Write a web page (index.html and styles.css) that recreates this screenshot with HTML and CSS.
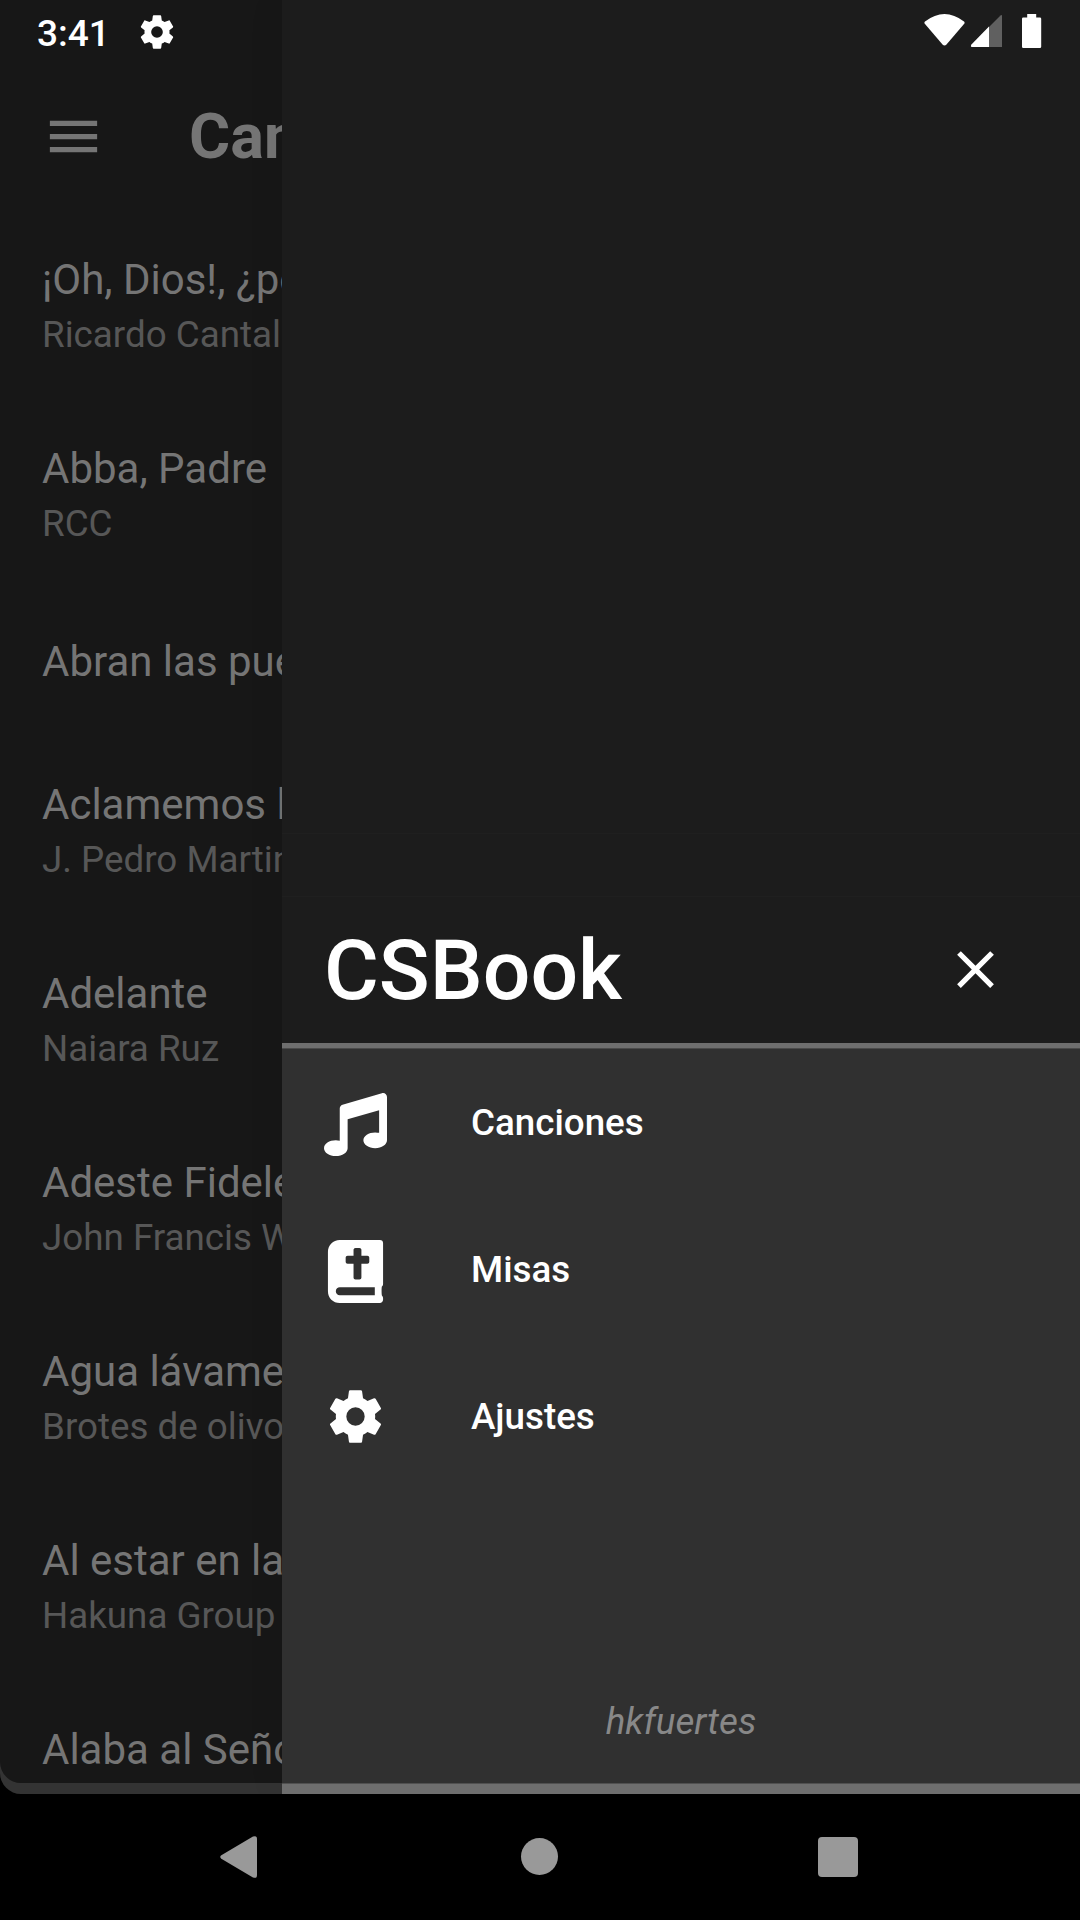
FILE: index.html
```html
<!DOCTYPE html>
<html lang="es">
<head>
<meta charset="utf-8">
<title>CSBook</title>
<link rel="stylesheet" href="styles.css">
</head>
<body>
<div class="phone">
  <div class="screen">
    <main class="page">
      <header class="appbar">
        <svg class="icon" viewBox="0 0 24 24"><path d="M3 18h18v-2H3v2zm0-5h18v-2H3v2zm0-7v2h18V6H3z"/></svg>
        <h1 class="appbar-title">Canciones</h1>
      </header>
      <ul class="songs">
        <li class="song"><span class="song-title">¡Oh, Dios!, ¿por qué?</span><span class="song-author">Ricardo Cantalapiedra</span></li>
        <li class="song"><span class="song-title">Abba, Padre</span><span class="song-author">RCC</span></li>
        <li class="song song-single"><span class="song-title">Abran las puertas</span></li>
        <li class="song"><span class="song-title">Aclamemos la gloria</span><span class="song-author">J. Pedro Martins</span></li>
        <li class="song"><span class="song-title">Adelante</span><span class="song-author">Naiara Ruz</span></li>
        <li class="song"><span class="song-title">Adeste Fideles</span><span class="song-author">John Francis Wade</span></li>
        <li class="song"><span class="song-title">Agua lávame</span><span class="song-author">Brotes de olivo</span></li>
        <li class="song"><span class="song-title">Al estar en la</span><span class="song-author">Hakuna Group</span></li>
        <li class="song"><span class="song-title">Alaba al Señor</span></li>
      </ul>
    </main>
    <aside class="drawer">
      <div class="drawer-head">
        <h2 class="brand">CSBook</h2>
        <svg class="icon close" viewBox="0 0 24 24"><path d="M19 6.41L17.59 5 12 10.59 6.41 5 5 6.41 10.59 12 5 17.59 6.41 19 12 13.41 17.59 19 19 17.59 13.41 12z"/></svg>
      </div>
      <nav class="menu">
        <a class="menu-item">
          <svg class="icon" viewBox="0 0 512 512"><path d="M511.99 32.01c0-21.71-21.1-37.01-41.6-30.51L150.4 96c-13.3 4.2-22.4 16.5-22.4 30.5v261.42c-10.05-2.38-20.72-3.92-32-3.92-53.02 0-96 28.65-96 64s42.98 64 96 64 96-28.65 96-64V214.31l256-75.02v184.63c-10.05-2.38-20.72-3.92-32-3.92-53.02 0-96 28.65-96 64s42.98 64 96 64 96-28.65 96-64l-.01-351.99z"/></svg>
          <span class="menu-label">Canciones</span>
        </a>
        <a class="menu-item">
          <svg class="icon" viewBox="-32 0 512 512"><path d="M448 358.4V25.6c0-16-9.6-25.6-25.6-25.6H96C41.6 0 0 41.6 0 96v320c0 54.4 41.6 96 96 96h326.4c12.8 0 25.6-9.6 25.6-25.6v-16c0-6.4-3.2-12.8-9.6-19.2-3.2-16-3.2-60.8 0-73.6 6.4-3.2 9.6-9.6 9.6-19.2zM144 144c0-8.84 7.16-16 16-16h48V80c0-8.84 7.16-16 16-16h32c8.84 0 16 7.16 16 16v48h48c8.84 0 16 7.16 16 16v32c0 8.84-7.16 16-16 16h-48v112c0 8.84-7.16 16-16 16h-32c-8.84 0-16-7.16-16-16V192h-48c-8.84 0-16-7.16-16-16v-32zm236.8 304H96c-19.2 0-32-12.8-32-32s16-32 32-32h284.8v64z"/></svg>
          <span class="menu-label">Misas</span>
        </a>
        <a class="menu-item">
          <svg class="icon gear" viewBox="0 0 24 24"><path d="M12 15.5A3.5 3.5 0 0 1 8.5 12 3.5 3.5 0 0 1 12 8.5a3.5 3.5 0 0 1 3.5 3.5 3.5 3.5 0 0 1-3.5 3.5m7.43-2.53c.04-.32.07-.64.07-.97s-.03-.66-.07-1l2.11-1.63c.19-.15.24-.42.12-.64l-2-3.46c-.12-.22-.39-.31-.61-.22l-2.49 1c-.52-.39-1.06-.73-1.69-.98l-.37-2.65A.506.506 0 0 0 14 2h-4c-.25 0-.46.18-.5.42l-.37 2.65c-.63.25-1.17.59-1.69.98l-2.49-1c-.22-.09-.49 0-.61.22l-2 3.46c-.13.22-.07.49.12.64L4.57 11c-.04.34-.07.67-.07 1s.03.65.07.97l-2.11 1.66c-.19.15-.25.42-.12.64l2 3.46c.12.22.39.3.61.22l2.49-1.01c.52.4 1.06.74 1.69.99l.37 2.65c.04.24.25.42.5.42h4c.25 0 .46-.18.5-.42l.37-2.65c.63-.26 1.17-.59 1.69-.99l2.49 1.01c.22.08.49 0 .61-.22l2-3.46c.12-.22.07-.49-.12-.64l-2.11-1.66z"/></svg>
          <span class="menu-label">Ajustes</span>
        </a>
      </nav>
      <footer class="credit">hkfuertes</footer>
    </aside>
    <div class="statusbar">
      <span class="clock">3:41</span>
      <svg class="status-gear" viewBox="0 0 24 24"><path d="M12 15.5A3.5 3.5 0 0 1 8.5 12 3.5 3.5 0 0 1 12 8.5a3.5 3.5 0 0 1 3.5 3.5 3.5 3.5 0 0 1-3.5 3.5m7.43-2.53c.04-.32.07-.64.07-.97s-.03-.66-.07-1l2.11-1.63c.19-.15.24-.42.12-.64l-2-3.46c-.12-.22-.39-.31-.61-.22l-2.49 1c-.52-.39-1.06-.73-1.69-.98l-.37-2.65A.506.506 0 0 0 14 2h-4c-.25 0-.46.18-.5.42l-.37 2.65c-.63.25-1.17.59-1.69.98l-2.49-1c-.22-.09-.49 0-.61.22l-2 3.46c-.13.22-.07.49.12.64L4.57 11c-.04.34-.07.67-.07 1s.03.65.07.97l-2.11 1.66c-.19.15-.25.42-.12.64l2 3.46c.12.22.39.3.61.22l2.49-1.01c.52.4 1.06.74 1.69.99l.37 2.65c.04.24.25.42.5.42h4c.25 0 .46-.18.5-.42l.37-2.65c.63-.26 1.17-.59 1.69-.99l2.49 1.01c.22.08.49 0 .61-.22l2-3.46c.12-.22.07-.49-.12-.64l-2.11-1.66z"/></svg>
      <svg class="status-right" viewBox="0 0 120 40">
        <path d="M1 8Q20.500-7 40 8Q41.200 9 40 10.500L22.500 31Q20.500 33 18.500 31L1 10.500Q-.2 9 1 8Z" transform="translate(0 3.500)"/>
        <path d="M47.500 34.500L76.500 5.500Q78 4.500 78 6V37H48Q46 36.500 47.500 34.500Z" opacity=".3"/>
        <path d="M47.500 34.500L65 16.500V37H48Q46 36.500 47.500 34.500Z"/>
        <path d="M103.200 4h9v3.500h3.700q1.300 0 1.300 1.300V36.700q0 1.300-1.300 1.300H99.300q-1.300 0-1.300-1.300V8.800q0-1.300 1.300-1.300h3.900z"/>
      </svg>
    </div>
  </div>
  <div class="navbar">
    <svg class="nav-back" viewBox="0 0 38 42"><path d="M1.300 19.300L33 .6Q37 -1 37 3V39Q37 43 33 41.400L1.300 22.700Q-.8 21 1.300 19.300Z"/></svg>
    <span class="nav-home"></span>
    <span class="nav-recent"></span>
  </div>
</div>
</body>
</html>
```
FILE: styles.css
```css
* { box-sizing: border-box; }
body { margin: 0; background: #000; font-family: Roboto, sans-serif; }
h1, h2, ul { margin: 0; padding: 0; list-style: none; }
svg { display: block; flex: none; fill: currentColor; }

.phone { width: 1080px; height: 1920px; display: flex; flex-direction: column; overflow: hidden; }
.screen {
  position: relative;
  height: 1794px;
  padding-bottom: 11px;
  background: #333;
  border-bottom-left-radius: 21px;
  overflow: hidden;
}
.icon { width: 63px; height: 63px; }

.page {
  height: 1783px;
  padding-top: 63px;
  background: #171717;
  border-bottom-left-radius: 21px;
  overflow: hidden;
  white-space: nowrap;
}
.appbar { height: 147px; padding-left: 42px; display: flex; align-items: center; gap: 84px; color: #757575; }
.appbar-title { font-size: 63px; font-weight: 700; line-height: 74px; }
.song { height: 189px; padding: 41px 42px 0; display: flex; flex-direction: column; }
.song-single { height: 147px; padding-top: 45px; }
.song-title { font-size: 42px; line-height: 57px; color: #757575; }
.song-author { font-size: 36.75px; line-height: 53px; color: #575757; }

.drawer {
  position: absolute;
  top: 0;
  right: 0;
  width: 798px;
  height: 1794px;
  display: flex;
  flex-direction: column;
  background: #303030;
  border-bottom: 10px solid #6e6e6e;
  box-shadow: 0 0 36px rgba(0, 0, 0, .07);
  color: #fff;
}
.drawer-head {
  height: 1048px;
  padding: 0 73.5px 42px 42px;
  display: flex;
  align-items: flex-end;
  justify-content: space-between;
  background:
    linear-gradient(#1f1f1f, #1f1f1f) 0 833px / 100% 1px no-repeat,
    linear-gradient(#1f1f1f, #1f1f1f) 0 896px / 100% 1px no-repeat,
    #1c1c1c;
  border-bottom: 5px solid #6e6e6e;
}
.brand { font-size: 84px; font-weight: 500; line-height: 60px; }
.menu { padding-top: 2px; border-top: 1px solid #4a4a4a; }
.menu-item { height: 147px; padding-left: 42px; display: flex; align-items: center; gap: 84px; }
.menu-label { margin-top: -5px; font-size: 36.75px; font-weight: 500; line-height: 43px; }
.gear { margin-top: -4px; }
.credit {
  margin-top: auto;
  padding-bottom: 40px;
  border-bottom: 1px solid #505050;
  text-align: center;
  font-size: 36.75px;
  font-style: italic;
  line-height: 43px;
  color: #888;
}

.statusbar {
  position: absolute;
  top: 0;
  left: 0;
  width: 1080px;
  height: 63px;
  padding: 0 36px 0 37px;
  display: flex;
  align-items: center;
  color: #fff;
}
.clock { width: 100px; font-size: 37px; font-weight: 500; line-height: 43px; padding-top: 3px; }
.status-gear { width: 40px; height: 40px; }
.status-right { width: 120px; height: 40px; margin: -3px 0 0 auto; }

.navbar { height: 126px; padding: 0 222px 1px 220px; display: flex; align-items: center; color: #999; }
.nav-back { width: 38px; height: 42px; }
.nav-home { width: 37px; height: 37px; margin-left: 263px; border-radius: 50%; background: currentColor; }
.nav-recent { width: 40px; height: 40px; margin-left: auto; border-radius: 4px; background: currentColor; }
```
